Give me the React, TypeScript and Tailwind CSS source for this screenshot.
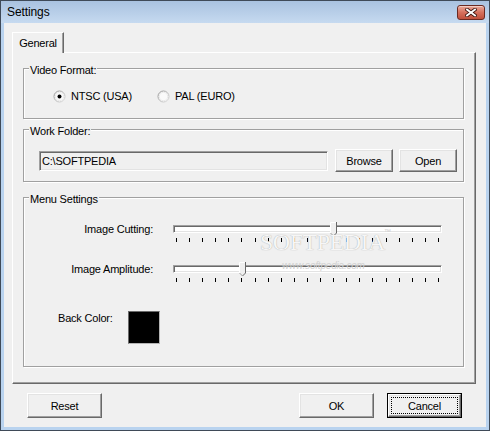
import React from "react";

const raised =
  "bg-[#f0f0f0] border border-t-white border-l-white border-r-[#696969] border-b-[#696969] shadow-[inset_-1px_-1px_0_#a0a0a0,inset_1px_1px_0_#e3e3e3]";
const sunken =
  "border border-t-[#a0a0a0] border-l-[#a0a0a0] border-r-white border-b-white shadow-[inset_1px_1px_0_#696969,inset_-1px_-1px_0_#e3e3e3]";

function Group({
  label,
  className,
  children,
}: {
  label: string;
  className: string;
  children?: React.ReactNode;
}) {
  return (
    <div
      className={`relative w-[441px] border border-[#a0a0a0] shadow-[inset_1px_1px_0_#fff,1px_1px_0_#fff] ${className}`}
    >
      <span className="absolute -top-[6px] left-[5px] bg-[#f0f0f0] px-px leading-[14px]">
        {label}
      </span>
      {children}
    </div>
  );
}

function Radio({ checked }: { checked: boolean }) {
  return (
    <svg width="13" height="13" viewBox="0 0 13 13">
      <defs>
        <linearGradient id={checked ? "rg1" : "rg2"} x1="0" y1="0" x2="1" y2="1">
          <stop offset="0" stopColor="#8d8d8d" />
          <stop offset="1" stopColor="#dcdcdc" />
        </linearGradient>
      </defs>
      <circle cx="6.5" cy="6.5" r="5.5" fill="#fafafa" stroke={`url(#${checked ? "rg1" : "rg2"})`} />
      <circle cx="6.5" cy="6.5" r="4.2" fill="none" stroke="#e6e6e6" strokeWidth="0.8" />
      {checked && <circle cx="6.5" cy="6.5" r="2" fill="#000" />}
    </svg>
  );
}

function Slider({ pos }: { pos: number }) {
  return (
    <div className="relative w-[269px] pt-[3px]">
      <div className={`h-[8px] bg-white ${sunken}`} />
      <div className="mt-[5px] mx-[3px] flex justify-between h-[4px]">
        {Array.from({ length: 21 }).map((_, i) => (
          <div key={i} className="w-px h-[4px] bg-black" />
        ))}
      </div>
      <svg
        className="absolute top-0"
        style={{ left: Math.round((pos * 262) / 20) }}
        width="7"
        height="15"
        viewBox="0 0 7 15"
      >
        <path d="M0 0H7V11L3.5 14.5L0 11Z" fill="#f0f0f0" />
        <path d="M0.5 11V0.5H6" stroke="#fff" fill="none" />
        <path d="M6.5 0V11L3.5 14" stroke="#696969" fill="none" />
        <path d="M0.5 11L3.5 14" stroke="#a0a0a0" fill="none" />
      </svg>
    </div>
  );
}

function Btn({ label }: { label: string }) {
  return (
    <div className={`w-[58px] h-[23px] flex items-center justify-center leading-[14px] ${raised}`}>
      {label}
    </div>
  );
}

export default function App() {
  return (
    <div className="relative w-[490px] h-[431px] flex flex-col bg-[#b9d3ef] border border-[#3f4a58] text-black text-[11px] tracking-[-0.2px] font-['Liberation_Sans',Arial,sans-serif] overflow-hidden">
      {/* title bar */}
      <div className="h-[22px] flex items-center pl-[6px] pr-[4px] bg-linear-to-b from-[#a9c2e0] to-[#c6daf0]">
        <span className="text-[12px] tracking-[-0.1px] leading-[16px] flex-1">Settings</span>
        <div className="w-[28px] h-[15px] rounded-[3px] border border-[#6b2a22] bg-linear-to-b from-[#e9a899] via-[#d5705d] to-[#c0503c] flex items-center justify-center shadow-[inset_0_1px_0_rgba(255,255,255,0.45)]">
          <svg width="12" height="9" viewBox="0 0 12 9">
            <path d="M2 1.5L10 7.5M10 1.5L2 7.5" stroke="#3d1510" strokeWidth="3.6" strokeLinecap="square" />
            <path d="M2 1.5L10 7.5M10 1.5L2 7.5" stroke="#ffffff" strokeWidth="1.9" strokeLinecap="square" />
          </svg>
        </div>
      </div>

      {/* client area */}
      <div className="mx-[3px] mb-[3px] flex-1 bg-[#f0f0f0] flex flex-col pt-[9px]">
        {/* tab */}
        <div className="ml-[8px] relative z-10 -mb-px w-[52px] h-[21px] bg-[#f0f0f0] border-t border-l border-r border-t-white border-l-white border-r-[#696969] shadow-[inset_-1px_0_0_#a0a0a0] flex items-center justify-center leading-[14px]">
          General
        </div>
        {/* panel */}
        <div className="ml-[8px] w-[464px] h-[332px] border border-t-white border-l-white border-r-[#696969] border-b-[#696969] shadow-[inset_-1px_-1px_0_#a0a0a0] pt-[15px] pl-[10px] flex flex-col">
          <Group label="Video Format:" className="h-[51px]">
            <div className="pt-[20px] pl-[29px] flex items-center">
              <div className="w-[104px] flex items-center">
                <Radio checked />
                <span className="ml-[5px] leading-[14px]">NTSC (USA)</span>
              </div>
              <div className="flex items-center">
                <Radio checked={false} />
                <span className="ml-[5px] leading-[14px]">PAL (EURO)</span>
              </div>
            </div>
          </Group>

          <Group label="Work Folder:" className="h-[53px] mt-[10px]">
            <div className="pt-[19px] pl-[15px] flex items-center h-[42px]">
              <div className={`w-[289px] h-[20px] bg-[#f0f0f0] pl-[2px] flex items-center leading-[14px] ${sunken}`}>
                C:\SOFTPEDIA
              </div>
              <div className="ml-[7px]">
                <Btn label="Browse" />
              </div>
              <div className="ml-[6px]">
                <Btn label="Open" />
              </div>
            </div>
          </Group>

          <Group label="Menu Settings" className="h-[170px] mt-[15px]">
            <div className="pt-[24px] flex flex-col">
              <div className="flex items-start">
                <div className="w-[129px] text-right leading-[14px]">Image Cutting:</div>
                <div className="ml-[20px]">
                  <Slider pos={12} />
                </div>
              </div>
              <div className="flex items-start mt-[20px]">
                <div className="w-[129px] text-right leading-[14px]">Image Amplitude:</div>
                <div className="ml-[20px]">
                  <Slider pos={5} />
                </div>
              </div>
              <div className="flex items-start mt-[29px] ml-[34px]">
                <div className="w-[70px] leading-[14px]">Back Color:</div>
                <div className="w-[32px] h-[33px] bg-black border border-t-[#6a6a6a] border-l-[#6a6a6a] border-r-[#b4b4b4] border-b-[#b4b4b4]" />
              </div>
            </div>
          </Group>
        </div>

        {/* bottom buttons */}
        <div className="mt-[9px] flex">
          <div className={`ml-[23px] w-[75px] h-[25px] flex items-center justify-center leading-[14px] ${raised}`}>
            Reset
          </div>
          <div className={`ml-[197px] w-[75px] h-[25px] flex items-center justify-center leading-[14px] ${raised}`}>
            OK
          </div>
          <div className="ml-[13px] w-[75px] h-[25px] border border-black flex">
            <div className={`relative flex-1 flex items-center justify-center leading-[14px] ${raised}`}>
              <div className="absolute inset-[2px] border border-dotted border-black" />
              Cancel
            </div>
          </div>
        </div>
      </div>

      {/* watermark */}
      <div className="pointer-events-none absolute left-[259px] top-[229px] text-[24px] leading-[24px] tracking-[-0.5px] text-[#f6f6f6] font-['Liberation_Serif',serif] [text-shadow:0_0_1px_#9a9a9a]">
        SOFTPEDIA
      </div>
      <div className="pointer-events-none absolute left-[383px] top-[227px] text-[7px] leading-[8px] text-[#cfcfcf]">
        ™
      </div>
      <div className="pointer-events-none absolute left-[281px] top-[259px] text-[10px] leading-[12px] italic text-[#d2d2d2]">
        www.softpedia.com
      </div>
    </div>
  );
}
